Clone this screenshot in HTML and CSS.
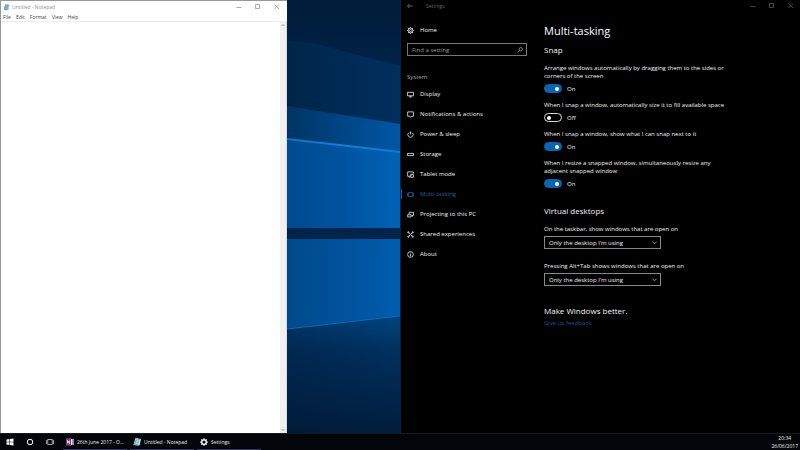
FILE: index.html
```html
<!DOCTYPE html>
<html lang="en">
<head>
<meta charset="utf-8">
<title>Desktop</title>
<link rel="stylesheet" href="styles.css">
</head>
<body>
<div class="workspace">
  <section class="notepad" aria-label="Notepad">
    <header class="titlebar">
      <svg class="app-icon" viewBox="0 0 16 16"><path d="M5 1l10 2-2 11-11-1z" fill="#a9d5dc"/><path d="M4 4l8 1-2 9-8-1z" fill="#5f9fa9"/><path d="M5 2l9 1" stroke="#707c80" stroke-width="2"/><path d="M6 7l5 1M5 10l5 1" stroke="#d7eff1"/></svg>
      <span class="caption">Untitled - Notepad</span>
      <span class="window-buttons">
        <button aria-label="Minimize"><svg viewBox="0 0 8 8"><path d="M1.500 4.500h5"/></svg></button>
        <button aria-label="Maximize"><svg viewBox="0 0 8 8"><path d="M1.500 1.500h4v4h-4z"/></svg></button>
        <button aria-label="Close"><svg viewBox="0 0 8 8"><path d="M1.500 1.500l4.500 4.500M6 1.500l-4.500 4.500"/></svg></button>
      </span>
    </header>
    <nav class="menu"><button>File</button><button>Edit</button><button>Format</button><button>View</button><button>Help</button></nav>
    <div class="editor">
      <textarea aria-label="Text editor"></textarea>
      <div class="scrollbar"><svg viewBox="0 0 6 6"><path d="M1.500 4L3 2.500 4.500 4"/></svg><svg viewBox="0 0 6 6"><path d="M1.500 2L3 3.500 4.500 2"/></svg></div>
    </div>
  </section>

  <div class="wallpaper">
    <svg viewBox="0 0 114 433" preserveAspectRatio="none">
      <defs>
        <linearGradient id="sky" x2="0" y2="1"><stop offset="0" stop-color="#001c3a"/><stop offset=".5" stop-color="#002348"/><stop offset="1" stop-color="#002c58"/></linearGradient>
        <linearGradient id="beam"><stop offset="0" stop-color="#002549"/><stop offset="1" stop-color="#002f5e"/></linearGradient>
        <linearGradient id="glow"><stop offset="0" stop-color="#003464"/><stop offset="1" stop-color="#0057a6"/></linearGradient>
        <linearGradient id="paneTop" x2="1" y2="0"><stop offset="0" stop-color="#004a90"/><stop offset=".5" stop-color="#0053a0"/><stop offset="1" stop-color="#0062b6"/></linearGradient>
        <linearGradient id="paneLow" x2="1" y2="0"><stop offset="0" stop-color="#00488a"/><stop offset="1" stop-color="#005dae"/></linearGradient>
        <linearGradient id="floor" x2="0" y2="1"><stop offset="0" stop-color="#004682"/><stop offset=".3" stop-color="#00305f"/><stop offset="1" stop-color="#001d3c"/></linearGradient>
        <linearGradient id="shade"><stop offset="0" stop-color="#001937" stop-opacity=".35"/><stop offset="1" stop-color="#001937" stop-opacity="0"/></linearGradient>
        <linearGradient id="edge"><stop offset="0" stop-color="#0872c6"/><stop offset=".5" stop-color="#1280d8"/><stop offset="1" stop-color="#1078d0"/></linearGradient>
      </defs>
      <path d="M0 0h114v150H0z" fill="url(#sky)"/>
      <path d="M0 40l30 4 84 22v60L0 107z" fill="url(#beam)"/>
      <path d="M0 106l114 18v28L0 139z" fill="url(#glow)"/>
      <path d="M0 139l114 13v77H0z" fill="url(#paneTop)"/>
      <path d="M0 139l114 13" stroke="url(#edge)" stroke-width="2"/>
      <path d="M0 228h114v12H0z" fill="#00244a"/>
      <path d="M0 239h114v78L0 330z" fill="url(#paneLow)"/>
      <path d="M0 329l114-13v117H0z" fill="url(#floor)"/>
      <path d="M0 329l114-13v117H0z" fill="url(#shade)"/>
      <path d="M0 329l114-13" stroke="#0869b8"/>
    </svg>
  </div>

  <section class="settings" aria-label="Settings">
    <header class="titlebar">
      <button class="back" aria-label="Back"><svg viewBox="0 0 8 8"><path d="M6.500 4H1.500M3.500 2L1.500 4l2 2"/></svg></button>
      <span class="caption">Settings</span>
      <span class="window-buttons">
        <button aria-label="Minimize"><svg viewBox="0 0 8 8"><path d="M1.500 4.500h5"/></svg></button>
        <button aria-label="Maximize"><svg viewBox="0 0 8 8"><path d="M1.500 1.500h4v4h-4z"/></svg></button>
        <button aria-label="Close"><svg viewBox="0 0 8 8"><path d="M1.500 1.500l4.500 4.500M6 1.500l-4.500 4.500"/></svg></button>
      </span>
    </header>
    <div class="settings-body">
      <nav class="side">
        <a class="item" href="#home"><svg viewBox="0 0 16 16"><circle cx="8" cy="8" r="5.500"/><circle cx="8" cy="8" r="2.300"/><path d="M8 .5v2M8 13.500v2M.5 8h2M13.500 8h2M2.700 2.700l1.400 1.400M11.900 11.900l1.400 1.400M2.700 13.300l1.400-1.400M11.900 4.100l1.400-1.400" stroke-width="2.500"/></svg>Home</a>
        <div class="search"><input type="text" aria-label="Find a setting" placeholder="Find a setting"><svg viewBox="0 0 16 16"><circle cx="10" cy="6" r="4.500"/><path d="M7 9l-5 5"/></svg></div>
        <h2 class="group">System</h2>
        <a class="item" href="#display"><svg viewBox="0 0 16 16"><path d="M1 3h14v8H1zM8 11v3M5 13.500h6"/></svg>Display</a>
        <a class="item" href="#notifications"><svg viewBox="0 0 16 16"><path d="M1.500 2h13v10H10l-2 2.500L6 12H1.500z"/></svg>Notifications &amp; actions</a>
        <a class="item" href="#power"><svg viewBox="0 0 16 16"><path d="M4.500 3.500a6 6 0 1 0 7 0M8 1v7"/></svg>Power &amp; sleep</a>
        <a class="item" href="#storage"><svg viewBox="0 0 16 16"><path d="M1 5.500h14v5H1z"/></svg>Storage</a>
        <a class="item" href="#tablet"><svg viewBox="0 0 16 16"><path d="M7 12H1.500V2h13v4M4 14h3"/><path d="M8.500 7.500h6v7h-6zM8.500 11l3-3.500"/></svg>Tablet mode</a>
        <a class="item current" href="#multitasking" aria-current="page"><svg viewBox="0 0 16 16"><path d="M3 3.500h10v9H3zM3 5H1v6h2M13 5h2v6h-2"/></svg>Multi-tasking</a>
        <a class="item" href="#projecting"><svg viewBox="0 0 16 16"><path d="M5 8V3h10v7h-4M1.500 8.500h8v5h-8zM12 10v3"/></svg>Projecting to this PC</a>
        <a class="item" href="#shared"><svg viewBox="0 0 16 16"><path d="M3 3l10 10M13 3L3 13"/><circle cx="3" cy="3" r="1.500"/><circle cx="13" cy="3" r="1.500"/><circle cx="3" cy="13" r="1.500"/><circle cx="13" cy="13" r="1.500"/></svg>Shared experiences</a>
        <a class="item" href="#about"><svg viewBox="0 0 16 16"><circle cx="8" cy="8" r="6.500"/><path d="M8 7v5M8 4v1.500"/></svg>About</a>
      </nav>
      <main class="page">
        <h1>Multi-tasking</h1>
        <h2>Snap</h2>
        <div class="setting"><label for="arrange">Arrange windows automatically by dragging them to the sides or corners of the screen</label><div class="switch"><input type="checkbox" role="switch" id="arrange" checked><span>On</span></div></div>
        <div class="setting"><label for="fill">When I snap a window, automatically size it to fill available space</label><div class="switch"><input type="checkbox" role="switch" id="fill"><span>Off</span></div></div>
        <div class="setting"><label for="next">When I snap a window, show what I can snap next to it</label><div class="switch"><input type="checkbox" role="switch" id="next" checked><span>On</span></div></div>
        <div class="setting"><label for="resize">When I resize a snapped window, simultaneously resize any adjacent snapped window</label><div class="switch"><input type="checkbox" role="switch" id="resize" checked><span>On</span></div></div>
        <h2 class="section">Virtual desktops</h2>
        <div class="choice"><label for="taskbar">On the taskbar, show windows that are open on</label><div class="dropdown"><select id="taskbar"><option>Only the desktop I’m using</option></select><svg viewBox="0 0 8 8"><path d="M1.500 3l2.500 2.500 2.500-2.500"/></svg></div></div>
        <div class="choice"><label for="alttab">Pressing Alt+Tab shows windows that are open on</label><div class="dropdown"><select id="alttab"><option>Only the desktop I’m using</option></select><svg viewBox="0 0 8 8"><path d="M1.500 3l2.500 2.500 2.500-2.500"/></svg></div></div>
        <h2 class="better">Make Windows better.</h2>
        <a class="feedback" href="#feedback">Give us feedback</a>
      </main>
    </div>
  </section>
</div>

<footer class="taskbar">
  <button class="system" aria-label="Start"><svg viewBox="0 0 16 16" fill="#fff"><path d="M1 3l6-1v5.500H1zM8 2l7-1v6.500H8zM1 8.500h6V14l-6-1zM8 8.500h7V15l-7-1z"/></svg></button>
  <button class="system" aria-label="Search"><svg viewBox="0 0 16 16" fill="none" stroke="#fff" stroke-width="2"><circle cx="8" cy="8" r="5.500"/></svg></button>
  <button class="system" aria-label="Task view"><svg viewBox="0 0 16 16" fill="none" stroke="#ddd" stroke-width="1.500"><path d="M3.500 3h9v10h-9zM2 5H.8v6H2M14 5h1.200v6H14"/></svg></button>
  <button class="task"><svg viewBox="0 0 16 16"><path d="M7 2h8v12H7z" fill="#eee4f0"/><path d="M12 2h3v12h-3z" fill="#b18bb8"/><path d="M0 1l10-1v16L0 15z" fill="#80397b"/><path d="M3 11V5l4 6V5" fill="none" stroke="#fff" stroke-width="1.500"/></svg><span>26th June 2017 - O...</span></button>
  <button class="task"><svg viewBox="0 0 16 16"><path d="M5 0l11 2-3 13-12-1z" fill="#d5edf0"/><path d="M4 4l9 1-3 10-9-1z" fill="#70b5c0"/><path d="M5 2l10 1" stroke="#87949a" stroke-width="2"/><path d="M6 7l5 1M5 10l5 1" stroke="#fff"/></svg><span>Untitled - Notepad</span></button>
  <button class="task"><svg viewBox="0 0 16 16" fill="none" stroke="#fff"><circle cx="8" cy="8" r="4.500" stroke-width="2.500"/><path d="M8 .5v3M8 12.500v3M.5 8h3M12.500 8h3M2.700 2.700l2 2M11.300 11.300l2 2M2.700 13.300l2-2M11.300 4.700l2-2" stroke-width="2.500"/></svg><span>Settings</span></button>
  <div class="clock"><time>20:34</time><time>26/06/2017</time></div>
</footer>
</body>
</html>
```
FILE: styles.css
```css
* { box-sizing: border-box; }
body {
  margin: 0;
  min-height: 100vh;
  display: flex;
  flex-direction: column;
  background: #000;
  color: #f0f0f0;
  font: 6px/8px "Open Sans", "Noto Sans", sans-serif;
}
button, input, select, textarea { font: inherit; color: inherit; margin: 0; padding: 0; border: 0; background: none; border-radius: 0; }
h1, h2 { margin: 0; font-weight: 400; }
a { color: inherit; text-decoration: none; }
svg { display: block; flex: none; }

.workspace { flex: 1; display: grid; grid-template-columns: 287fr 113fr 400fr; }

.titlebar { display: flex; align-items: center; height: 12px; font-size: 5px; }
.window-buttons { margin-left: auto; display: flex; gap: 11px; }
.window-buttons button, .back { width: 8px; height: 8px; }
.titlebar button svg { width: 8px; height: 8px; fill: none; stroke: currentColor; stroke-width: 1; }

.notepad { display: flex; flex-direction: column; background: #fff; color: #444; border-top: 1px solid #999; border-left: 1px solid #999; }
.notepad .titlebar { color: #909090; padding: 0 6px 0 2px; }
.notepad .window-buttons { color: #aaa; }
.app-icon { width: 7px; height: 7px; margin-right: 2px; }
.menu { display: flex; gap: 5px; height: 8px; padding-left: 2px; font-size: 5px; }
.editor { flex: 1; display: flex; border-top: 1px solid #eee; }
.editor textarea { flex: 1; min-width: 0; resize: none; outline: 0; }
.scrollbar { width: 7px; display: flex; flex-direction: column; justify-content: space-between; background: #f0f0f0; border-right: 1px solid #ddd; }
.scrollbar svg { width: 6px; height: 6px; fill: none; stroke: #999; }

.wallpaper { display: grid; background: #00264e; }
.wallpaper svg { width: 100%; height: 100%; }

.settings { background: #000; border-left: 1px solid #08203a; }
.settings .titlebar { color: #666; padding: 0 5px; }
.settings .window-buttons { color: #4a4a4a; }
.settings .caption { margin-left: 12px; }
.settings-body { display: grid; grid-template-columns: 143fr 256fr; }

.side { padding: 8px 17px 0 0; }
.item { display: flex; align-items: center; gap: 6px; height: 20px; padding-left: 6px; }
.item svg { width: 7px; height: 7px; fill: none; stroke: #ddd; stroke-width: 2; }
.item.current { color: #1460a8; position: relative; }
.item.current svg { stroke: #12579b; }
.item.current::before { content: ""; position: absolute; left: 0; top: 5px; width: 1px; height: 10px; background: #1460a8; }
.search { display: flex; align-items: center; height: 13px; margin: 3px 0 0 6px; padding: 0 3px 0 4px; border: 1px solid #777; }
.search input { flex: 1; min-width: 0; outline: 0; }
.search input::placeholder { color: #999; opacity: 1; }
.search svg { width: 6px; height: 6px; fill: none; stroke: #aaa; stroke-width: 2; }
.group { margin: 17px 0 3px 6px; font-size: 6px; color: #aaa; height: 8px; line-height: 8px; }

.page { padding-top: 11px; }
.page h1 { font-size: 11px; line-height: 16px; color: #fff; }
.page h2 { font-size: 8px; line-height: 12px; margin-top: 5px; color: #f4f4f4; }
.setting { width: 184px; margin-top: 8px; }
.setting label, .choice label { display: block; }
.switch { display: flex; align-items: center; gap: 5px; height: 9px; margin-top: 4px; }
.switch input { appearance: none; width: 18px; height: 9px; border: 1px solid #ddd; border-radius: 5px; display: flex; align-items: center; padding: 0 2px; }
.switch input::before { content: ""; width: 4px; height: 4px; border-radius: 50%; background: #fff; }
.switch input:checked { background: #0964b4; border-color: #0964b4; justify-content: flex-end; }
.page .section { margin-top: 17px; }
.choice { margin-top: 8px; }
.choice + .choice { margin-top: 13px; }
.dropdown { position: relative; width: 117px; margin-top: 3px; }
.dropdown select { appearance: none; display: block; width: 100%; height: 13px; padding: 0 4px; border: 1px solid #888; background: #000; }
.dropdown svg { position: absolute; right: 3px; top: 3px; width: 7px; height: 7px; fill: none; stroke: #aaa; stroke-width: 1; pointer-events: none; }
.page .better { margin-top: 19px; }
.feedback { display: inline-block; margin-top: 2px; color: #0959a5; }

.taskbar { display: flex; height: 17px; border-top: 1px solid #151a20; background: #02060b; color: #eee; font-size: 5px; line-height: 8px; }
.system { width: 20px; display: grid; place-items: center; }
.system svg, .task svg { width: 8px; height: 8px; }
.task { width: 64px; margin-left: 3px; padding-left: 3px; display: flex; align-items: center; gap: 3px; border-bottom: 1px solid #35356b; }
.clock { margin-left: auto; padding-right: 2px; display: flex; flex-direction: column; text-align: center; }
```
